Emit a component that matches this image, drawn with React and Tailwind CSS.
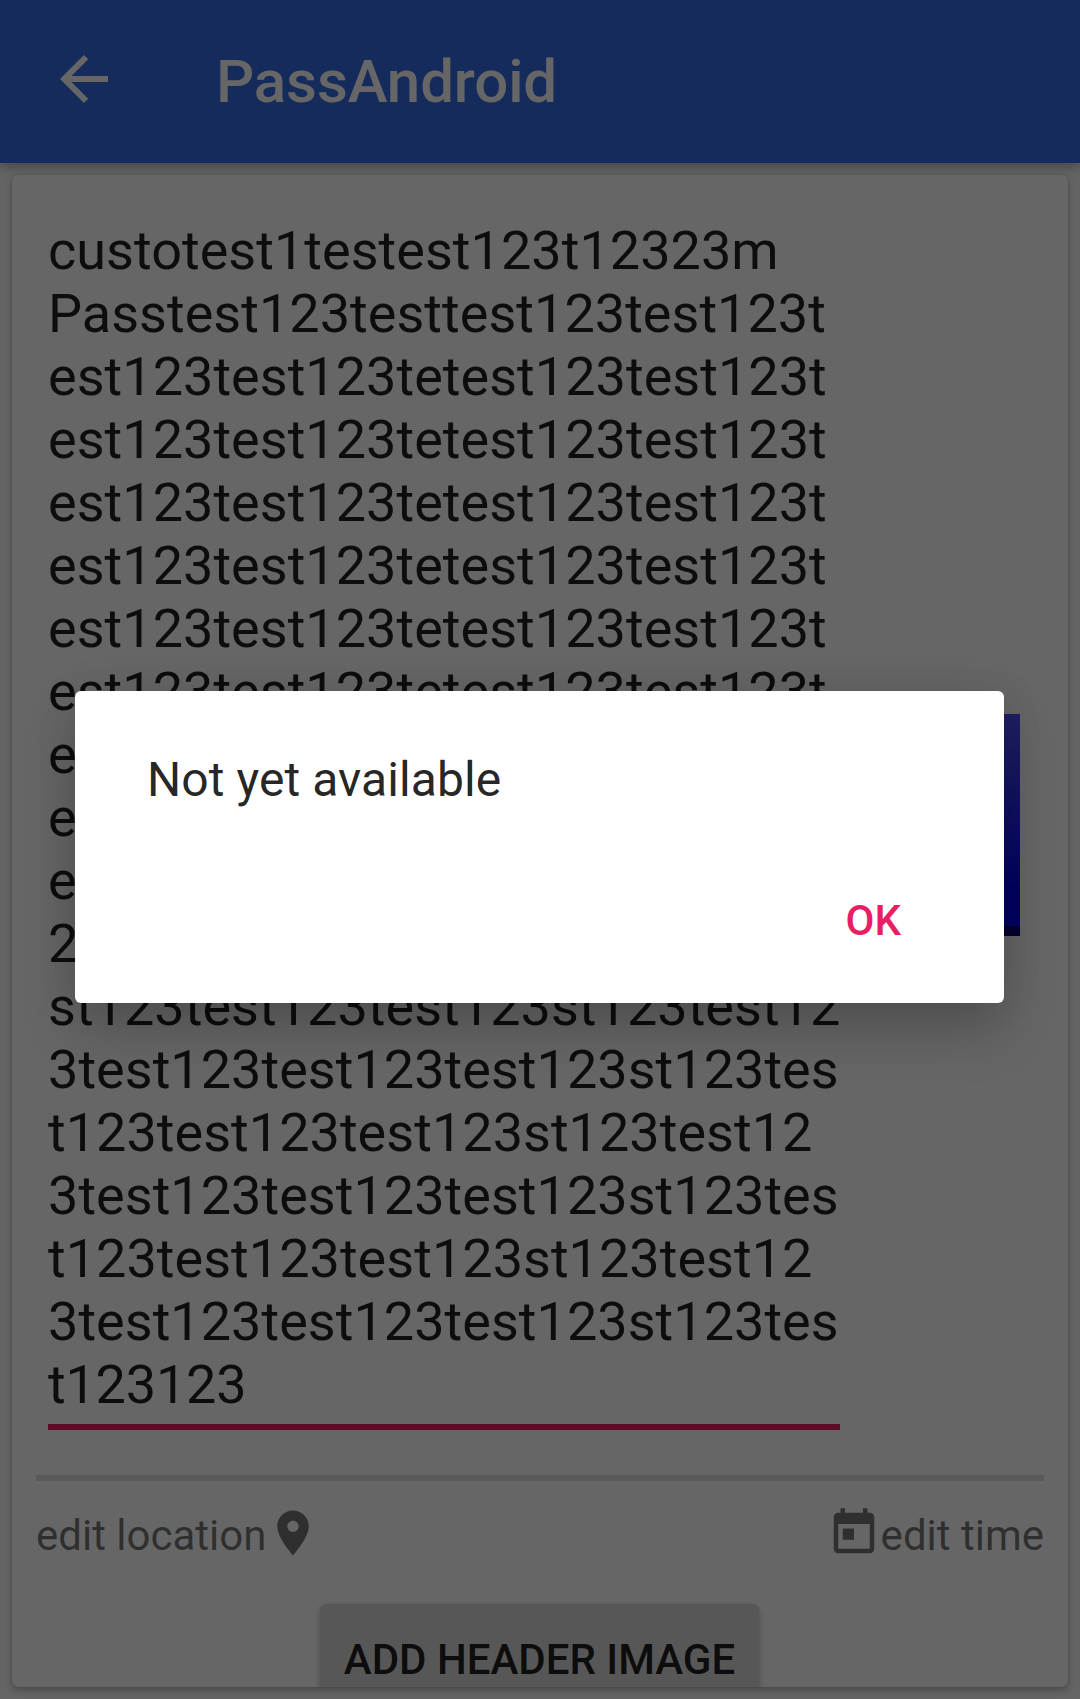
const passTitle = [
  'custotest1testest123t12323m',
  'Passtest123testtest123test123t',
  'est123test123tetest123test123t',
  'est123test123tetest123test123t',
  'est123test123tetest123test123t',
  'est123test123tetest123test123t',
  'est123test123tetest123test123t',
  'est123test123tetest123test123t',
  'est123test123tetest123test123t',
  'est123test123tetest123test123t',
  'est123test123tetest123test123t',
  '23test123test123test123st123te',
  'st123test123test123st123test12',
  '3test123test123test123st123tes',
  't123test123test123st123test12',
  '3test123test123test123st123tes',
  't123test123test123st123test12',
  '3test123test123test123st123tes',
  't123123',
];

function Icon({ d, className }) {
  return (
    <svg viewBox="0 0 24 24" fill="currentColor" className={className}>
      <path d={d} />
    </svg>
  );
}

const ARROW_BACK = 'M20 11H7.83l5.59-5.59L12 4l-8 8 8 8 1.41-1.41L7.83 13H20v-2z';
const PLACE =
  'M12 2C8.13 2 5 5.13 5 9c0 5.25 7 13 7 13s7-7.75 7-13c0-3.87-3.13-7-7-7zm0 9.5c-1.38 0-2.5-1.12-2.5-2.5s1.12-2.5 2.5-2.5 2.5 1.12 2.5 2.5-1.12 2.5-2.5 2.5z';
const TODAY =
  'M19 3h-1V1h-2v2H8V1H6v2H5c-1.11 0-1.99.9-1.99 2L3 19c0 1.1.89 2 2 2h14c1.1 0 2-.9 2-2V5c0-1.1-.9-2-2-2zm0 16H5V8h14v11zM7 10h5v5H7z';

function AppBar() {
  return (
    <header className="flex h-[163px] shrink-0 items-center bg-[#356be7] pb-[5px] pl-12 text-white shadow-[0_4px_12px_rgba(0,0,0,0.3)]">
      <Icon d={ARROW_BACK} className="size-[72px]" />
      <h1 className="ml-24 pt-[5px] text-[60px] leading-[70px] font-medium tracking-[-0.1px]">
        PassAndroid
      </h1>
    </header>
  );
}

function PassCard() {
  return (
    <main className="mx-3 mt-3 flex h-[1512px] flex-col rounded-md bg-white px-6 pt-11 shadow-[0_3px_7px_rgba(0,0,0,0.28),0_0_2px_rgba(0,0,0,0.15)]">
      <div className="flex items-center justify-between pr-6">
        <div className="ml-3 h-[1211px] w-[792px] border-b-[6px] border-[#e91e63] text-[54px] leading-[63px] tracking-[0.03px] whitespace-nowrap text-black/87">
          {passTitle.map((line, i) => (
            <p key={i} className="last:tracking-[-0.2px]">
              {line}
            </p>
          ))}
        </div>
        <div className="h-[222px] w-[120px] border-b-[10px] border-[#000078] bg-linear-to-b from-[#5250f5] via-[#2222f5] via-50% to-[#0000f8] to-85%" />
      </div>
      <div className="mt-[45px] h-1.5 shrink-0 bg-black/12" />
      <div className="mt-[25px] flex h-[54px] items-start justify-between text-[42px] leading-[49px] text-black/54">
        <span className="flex">
          <span className="pt-[5px]">edit location</span>
          <Icon d={PLACE} className="size-[54px]" />
        </span>
        <span className="flex">
          <Icon d={TODAY} className="size-[54px]" />
          <span className="pt-[5px]">edit time</span>
        </span>
      </div>
      <div className="-mx-6 mt-8 flex min-h-0 flex-1 justify-center overflow-hidden pt-3 pr-px">
        <button className="flex h-[108px] w-[439px] shrink-0 justify-center rounded-md bg-[#d9d9d9] pt-[31px] text-[42px] leading-[49px] font-medium whitespace-nowrap text-black/87 shadow-[0_3px_6px_rgba(0,0,0,0.25)]">
          ADD HEADER IMAGE
        </button>
      </div>
    </main>
  );
}

function Dialog() {
  return (
    <div className="absolute inset-0 bg-black/60 pt-[691px] pl-[75px]">
      <div
        role="dialog"
        className="flex h-[312px] w-[929px] flex-col rounded-md bg-white pt-[61px] pl-[72px] shadow-[0_28px_56px_rgba(0,0,0,0.2),0_0_44px_rgba(0,0,0,0.08)]"
      >
        <p className="text-[48px] leading-[56px] tracking-[0.07px] text-black/87">Not yet available</p>
        <button className="mt-[88px] mr-[103px] self-end text-[42px] leading-[49px] font-medium text-[#e91e63]">
          OK
        </button>
      </div>
    </div>
  );
}

export default function App() {
  return (
    <div className="relative flex h-[1699px] w-[1080px] flex-col overflow-hidden bg-[#fafafa] font-[Roboto,sans-serif]">
      <AppBar />
      <PassCard />
      <Dialog />
    </div>
  );
}
